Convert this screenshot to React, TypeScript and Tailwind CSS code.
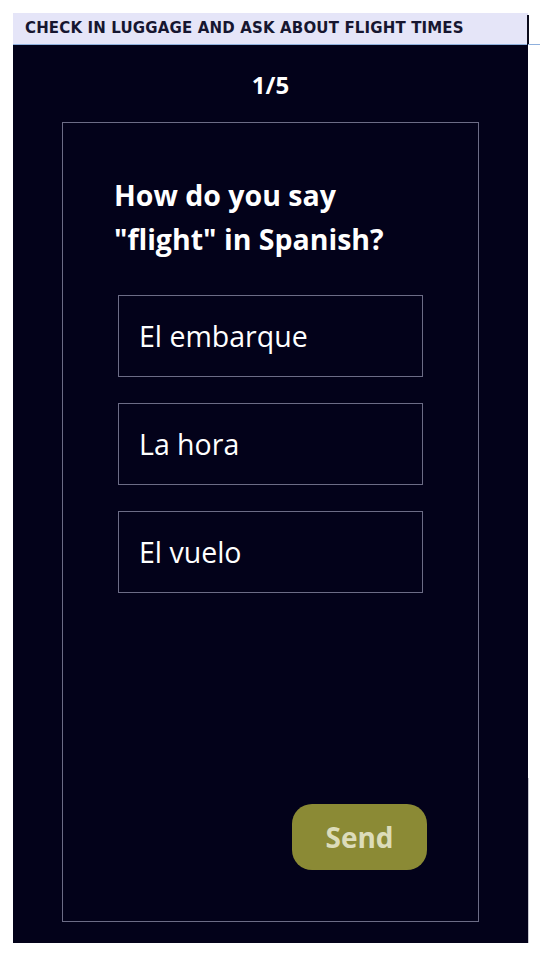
import React, { useState } from "react";

const options = ["El embarque", "La hora", "El vuelo"];

export default function App() {
  const [picked, setPicked] = useState<number | null>(null);

  return (
    <div className="w-[540px] h-[960px] bg-white pt-[13px] pl-[13px]" style={{ fontFamily: "'Open Sans', Lato, sans-serif" }}>
      <div className="w-[515px] relative">
        <div className="h-[32px] bg-[#e5e5f8] border-b border-[#8fb0dd] flex items-center pl-[12px]">
          <span
            className="text-[15px] font-bold uppercase text-[#161630] tracking-[0.15px]"
            style={{ fontFamily: "'DejaVu Sans', Arial, sans-serif" }}
          >
            Check in luggage and ask about flight times
          </span>
        </div>
        <div className="absolute right-[-1px] top-[2px] h-[30px] w-[2px] bg-[#0b0b1c]" />
        <div className="absolute right-[-12px] top-[31px] h-[1px] w-[12px] bg-[#8fb0dd]" />
        <div className="absolute right-[-1px] top-[765px] h-[165px] w-[1px] bg-[#c8c8d0]" />

        <div className="h-[898px] bg-[#03021a] flex flex-col items-center pt-[24px]">
          <div className="text-white text-[24px] font-bold leading-[32px]">1/5</div>

          <div className="mt-[21px] w-[417px] h-[800px] border border-[#6c6c86] flex flex-col pl-[51px] pr-[51px] pb-[51px]">
            <h1 className="mt-[50px] text-white text-[28.5px] font-bold leading-[44px]">
              How do you say
              <br />
              "flight" in Spanish?
            </h1>

            <div className="mt-[34px] ml-[4px] flex flex-col gap-[26px]">
              {options.map((opt, i) => (
                <button
                  key={opt}
                  onClick={() => setPicked(i)}
                  className={
                    "w-[305px] h-[82px] border text-left pl-[20px] text-white text-[28.5px] " +
                    (picked === i ? "border-[#b8b86a]" : "border-[#6c6c86]")
                  }
                >
                  {opt}
                </button>
              ))}
            </div>

            <div className="mt-auto flex justify-end">
              <button className="w-[135px] h-[66px] rounded-[20px] bg-[#8b8a35] text-[#dcdcba] text-[28px] font-bold">
                Send
              </button>
            </div>
          </div>
        </div>
      </div>
    </div>
  );
}
